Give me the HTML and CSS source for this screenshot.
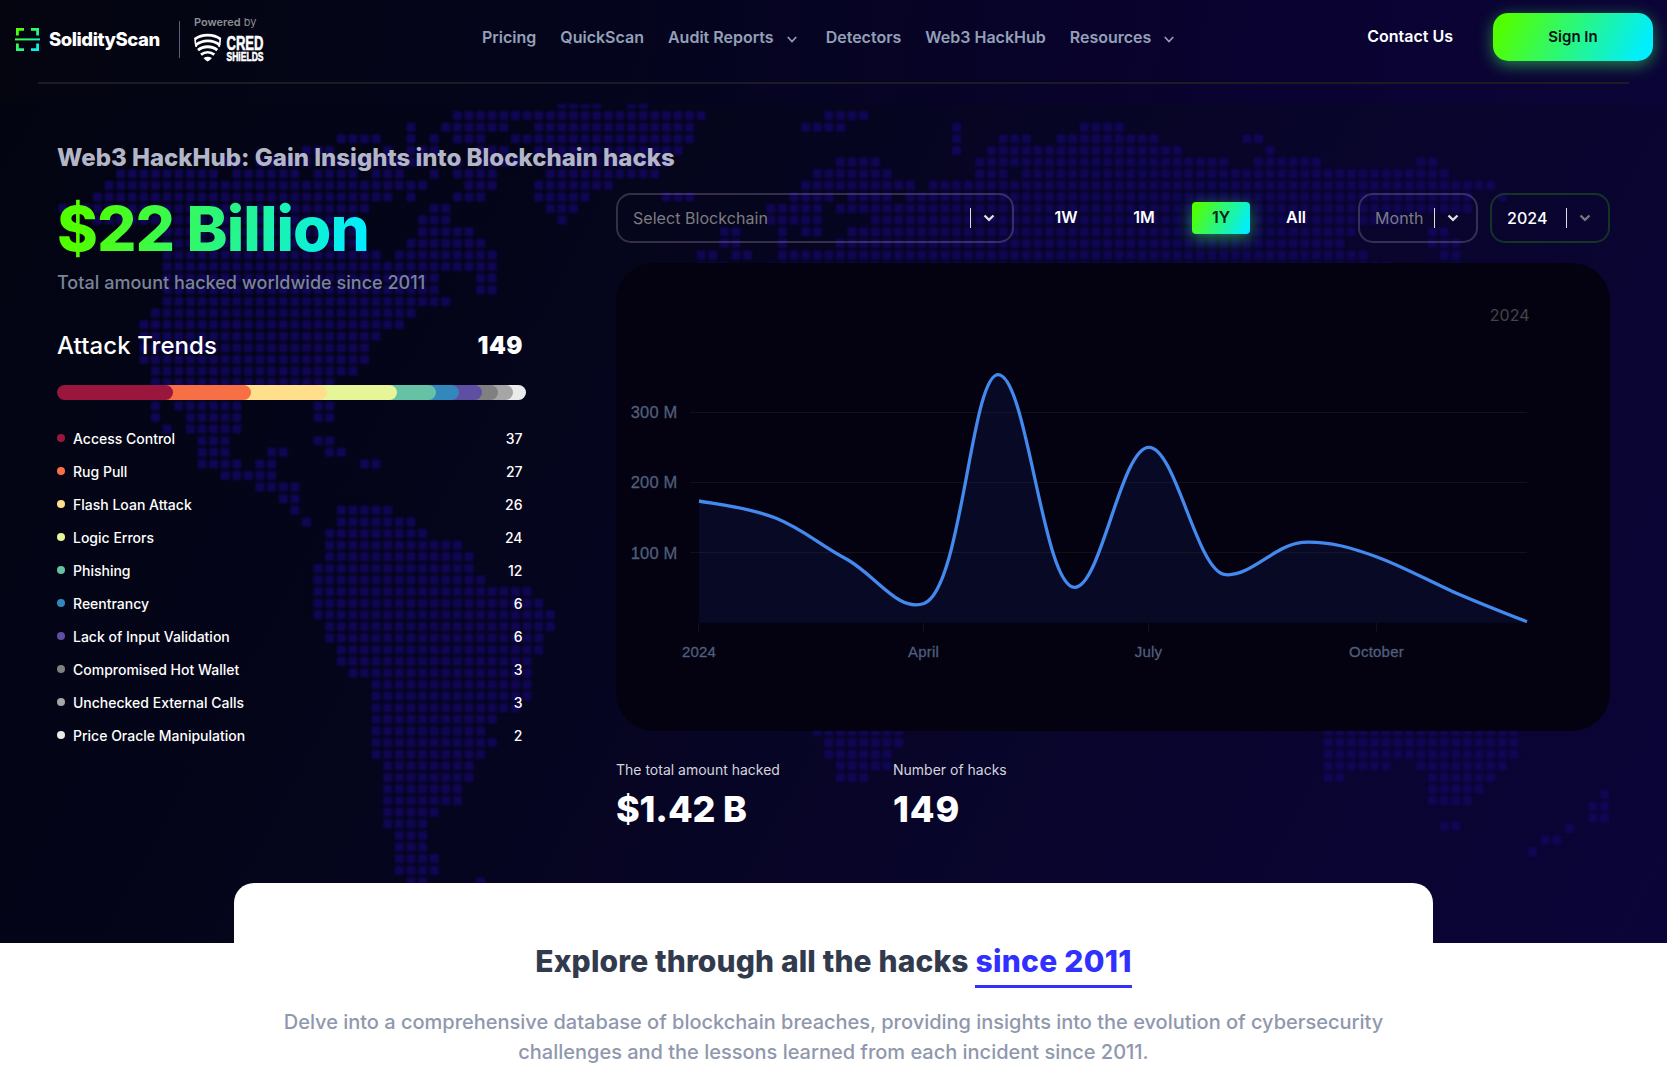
FILE: index.html
```html
<!DOCTYPE html>
<html lang="en">
<head>
<meta charset="utf-8">
<title>Web3 HackHub - SolidityScan</title>
<link rel="stylesheet" href="styles.css">
</head>
<body>
<header class="header">
  <div class="brand">
    <svg class="brand-icon" width="25" height="25" viewBox="0 0 25 25" fill="none" stroke="url(#brandGrad)" stroke-width="2.8">
      <defs><linearGradient id="brandGrad" gradientUnits="userSpaceOnUse" x1="0" y1="0" x2="25" y2="25"><stop offset="0.1" stop-color="#52ff00"/><stop offset="0.95" stop-color="#00eeff"/></linearGradient></defs>
      <path d="M2.400 8.500V2.400H9M16 2.400h6.600v6.100M2.400 16.500V22.600H9M16 22.600h6.600V16.500"/>
      <path d="M0 12.400h25v.01H0z" stroke-width="2"/>
    </svg>
    <span class="brand-name">SolidityScan</span>
    <span class="brand-divider"></span>
    <div class="powered">
      <span class="powered-label"><b>Powered</b> by</span>
      <svg class="cred-logo" width="74" height="32" viewBox="0 0 74 32">
        <g fill="none" stroke="#fff" stroke-width="2.800">
          <path d="M.8 6.200C8 .8 19.500 .8 26.600 6.200"/>
          <path d="M1.600 12.100c7-5.600 17.500-5.600 24.300 0"/>
          <path d="M4 17.100c5.500-4.500 14-4.500 19.300 0"/>
          <path d="M7 21.700c4-3.200 9.400-3.200 13.300 0"/>
          <path d="M1.100 5c0 4 .2 6.500 1.300 9" stroke-width="1.600"/>
          <path d="M26.200 5c0 4-.2 6.500-1.300 9" stroke-width="1.600"/>
        </g>
        <path d="M9.500 25q4.200-2.600 8.400 0Q16 27.500 13.700 28.500 11.400 27.500 9.500 25z" fill="#fff"/>
        <text class="cred" x="32.500" y="16.500" font-size="21" textLength="37" lengthAdjust="spacingAndGlyphs">CRED</text>
        <text class="cred" x="32.500" y="28.300" font-size="12.500" textLength="37" lengthAdjust="spacingAndGlyphs">SHiELDS</text>
      </svg>
    </div>
  </div>
  <nav class="nav">
    <a>Pricing</a><a>QuickScan</a>
    <a>Audit Reports<svg class="caret" viewBox="0 0 10 7"><path d="M.8 1 5 5.600 9.200 1"/></svg></a>
    <a>Detectors</a><a>Web3 HackHub</a>
    <a>Resources<svg class="caret" viewBox="0 0 10 7"><path d="M.8 1 5 5.600 9.200 1"/></svg></a>
  </nav>
  <div class="account">
    <a class="contact">Contact Us</a>
    <button class="signin">Sign In</button>
  </div>
</header>

<section class="hero">
  <svg class="map" id="map" width="1667" height="839"></svg>
  <div class="overview">
    <h1 class="title">Web3 HackHub: Gain Insights into Blockchain hacks</h1>
    <div class="amount">$22 Billion</div>
    <p class="amount-note">Total amount hacked worldwide since 2011</p>
    <div class="trends-head"><span>Attack Trends</span><b>149</b></div>
    <div class="trend-bar" id="bar"></div>
    <ul class="trend-list" id="trends"></ul>
  </div>
  <div class="panel">
    <div class="filters">
      <div class="select select-chain"><span>Select Blockchain</span><i></i><svg class="chev" viewBox="0 0 12 8"><path d="M1.500 1.500 6 5.800l4.500-4.300"/></svg></div>
      <div class="ranges"><button>1W</button><button>1M</button><button class="active">1Y</button><button>All</button></div>
      <div class="select select-month"><span>Month</span><i></i><svg class="chev" viewBox="0 0 12 8"><path d="M1.500 1.500 6 5.800l4.500-4.300"/></svg></div>
      <div class="select select-year"><span>2024</span><i></i><svg class="chev" viewBox="0 0 12 8"><path d="M1.500 1.500 6 5.800l4.500-4.300"/></svg></div>
    </div>
    <div class="chart">
      <svg width="994" height="468" viewBox="616 263 994 468">
        <text class="chart-year" x="1529.500" y="320.500" text-anchor="end">2024</text>
        <g class="ylabels" text-anchor="end"><text x="677.500" y="418">300 M</text><text x="677.500" y="488">200 M</text><text x="677.500" y="558.500">100 M</text></g>
        <path class="grid" d="M690 412.500h837M690 482.500h837M690 552.500h837M698.500 623v9M923.500 623v9M1148.500 623v9M1376.500 623v9"/>
        <path class="area" d="M699 501C719 504.500 749 507.500 775.600 518C804 529.500 818 544 847.300 559.500C878 577.500 898 612 923.900 603.500C962 590 971 374.600 998.100 374.600C1027 374.600 1043 587.300 1074.700 587.300C1101 587.300 1121 447.300 1148.900 447.300C1176 447.300 1197 573 1225.500 574.700C1250 577 1275 545 1302.200 542.300C1330 541 1352 548 1376.300 556.700C1403 566.500 1426 579.500 1453 591.700C1478 602.500 1502 612 1527 621.700V622.700H699z"/>
        <path class="line" d="M699 501C719 504.500 749 507.500 775.600 518C804 529.500 818 544 847.300 559.500C878 577.500 898 612 923.900 603.500C962 590 971 374.600 998.100 374.600C1027 374.600 1043 587.300 1074.700 587.300C1101 587.300 1121 447.300 1148.900 447.300C1176 447.300 1197 573 1225.500 574.700C1250 577 1275 545 1302.200 542.300C1330 541 1352 548 1376.300 556.700C1403 566.500 1426 579.500 1453 591.700C1478 602.500 1502 612 1527 621.700"/>
        <g class="xlabels" text-anchor="middle"><text x="699" y="657">2024</text><text x="923.500" y="657">April</text><text x="1148.500" y="657">July</text><text x="1376.500" y="657">October</text></g>
      </svg>
    </div>
    <div class="stats">
      <div class="stat"><span>The total amount hacked</span><b>$1.42 B</b></div>
      <div class="stat"><span>Number of hacks</span><b class="count">149</b></div>
    </div>
  </div>
</section>

<section class="explore">
  <h2>Explore through all the hacks <span>since 2011</span></h2>
  <p>Delve into a comprehensive database of blockchain breaches, providing insights into the evolution of cybersecurity challenges and the lessons learned from each incident since 2011.</p>
</section>
<script src="script.js"></script>
</body>
</html>
```
FILE: styles.css
```css
* { box-sizing: border-box; }
body { margin: 0; background: #fff; font-family: Inter, "Liberation Sans", sans-serif; color: #fff; }
h1, h2, p, ul { margin: 0; padding: 0; }
button { font: inherit; border: 0; padding: 0; background: none; color: inherit; }

.header { position: relative; display: grid; grid-template-columns: 482px 1fr auto; height: 104px; background: linear-gradient(97deg, #04050f 0%, #04051c 35%, #0a0230 75%, #0b0437 100%); }
.header::after { content: ""; position: absolute; left: 38px; right: 38px; top: 82px; height: 2px; background: #1c1a22; }
.brand { display: flex; align-items: flex-start; padding-left: 15px; }
.brand-icon { margin-top: 27px; }
.brand-name { margin: 28px 0 0 9px; width: 111px; font-size: 18.500px; font-weight: 800; letter-spacing: -0.45px; line-height: 22px; white-space: nowrap; }
.brand-divider { width: 1px; height: 37px; margin: 21px 0 0 19px; background: #56617a; }
.powered { margin: 15px 0 0 14px; display: flex; flex-direction: column; }
.powered-label { font-size: 11px; line-height: 14px; color: #8d8d90; margin-bottom: 4px; }
.powered-label b { font-weight: 600; }
.cred-logo { overflow: visible; }
.cred { font-family: "Liberation Sans", sans-serif; font-weight: 700; fill: #fff; stroke: #fff; stroke-width: .6; }
.nav { display: flex; gap: 24px; padding-top: 27px; font-size: 16px; font-weight: 600; line-height: 20px; color: #94a0b8; white-space: nowrap; }
.caret { width: 10px; height: 7px; margin: 0 5px 0 13px; fill: none; stroke: #94a0b8; stroke-width: 1.700; }
.account { display: flex; align-items: flex-start; gap: 40px; padding: 13px 14px 0 0; font-size: 16px; font-weight: 600; }
.contact { line-height: 20px; margin-top: 13px; }
.signin { width: 160px; height: 48px; padding-bottom: 1px; border-radius: 15px; color: #04101a; font-size: 15px; font-weight: 600; background: linear-gradient(118deg, #52ff00 8%, #00eeff 92%); box-shadow: 0 4px 16px rgba(60, 255, 100, .5); }

.hero { position: relative; display: grid; grid-template-columns: 469px 994px; column-gap: 90px; height: 839px; padding-left: 57px; background: linear-gradient(118deg, #020411 0%, #05051b 32%, #080529 60%, #0b0438 100%); }
.map { position: absolute; left: 0; top: 0; fill: #100654; overflow: hidden; filter: blur(.8px); }
.overview, .panel { position: relative; }
.title { margin-top: 39px; font-size: 24px; line-height: 30px; font-weight: 800; color: #b3b6c6; white-space: nowrap; }
.amount { width: max-content; margin-top: 17px; font-size: 62px; line-height: 78px; font-weight: 800; letter-spacing: -1px; color: transparent; background: linear-gradient(105deg, #52ff00 10%, #00eeff 95%); background-clip: text; -webkit-background-clip: text; }
.amount-note { margin-top: 3px; font-size: 18px; line-height: 24px; font-weight: 500; letter-spacing: .03px; color: #7b8499; }
.trends-head { display: flex; justify-content: space-between; margin-top: 36px; padding-right: 3px; font-size: 24px; line-height: 30px; font-weight: 500; letter-spacing: .08px; }
.trends-head b { font-weight: 900; letter-spacing: .5px; }
.trend-bar { display: flex; margin-top: 24px; height: 15px; }
.segment { height: 15px; margin-right: -8px; padding: 0; border-radius: 8px; position: relative; box-sizing: content-box; }
.trend-list { list-style: none; margin-top: 22px; padding-right: 3.500px; }
.trend-list li { display: flex; align-items: center; height: 33px; font-size: 14px; font-weight: 500; }
.trend-list i { width: 8px; height: 8px; margin: -2px 8px 0 0; border-radius: 50%; }
.trend-list span { flex: 1; }

.filters { display: flex; margin-top: 89px; height: 50px; }
.select { display: flex; align-items: center; height: 50px; padding: 0 17px 0 15px; border: 2px solid rgba(120, 105, 140, .42); border-radius: 15px; font-size: 16px; letter-spacing: .05px; color: #7c7c80; }
.select span { flex: 1; }
.select i { width: 1px; height: 20px; background: #dcdce2; }
.chev { width: 12px; height: 8px; margin-left: 12px; fill: none; stroke: #dedee4; stroke-width: 2.300; }
.select-chain { width: 398px; }
.select-month { width: 120px; margin-right: 12px; }
.select-year { width: 120px; border-color: #143426; color: #fff; font-weight: 500; }
.select-year .chev { stroke: #77777f; }
.ranges { display: flex; align-items: center; gap: 20px; width: 344px; padding-left: 23px; padding-bottom: 1px; }
.ranges button { width: 58px; height: 32px; padding-bottom: 2px; font-size: 16px; font-weight: 600; border-radius: 4px; }
.ranges button:last-child { margin-left: -3px; }
.ranges .active { margin-left: -1px; color: #04201a; background: linear-gradient(118deg, #52ff00 8%, #00eeff 92%); box-shadow: 0 4px 16px rgba(60, 255, 100, .5); }
.chart { margin-top: 20px; height: 468px; border-radius: 38px; background: #040211; }
.chart svg { display: block; }
.chart-year { font-size: 16px; fill: #454548; }
.ylabels, .xlabels { font-family: "Liberation Sans", Arial, sans-serif; fill: #4f5e7c; stroke: #4f5e7c; stroke-width: .3; letter-spacing: .2px; }
.ylabels { font-size: 16.500px; }
.xlabels { font-size: 15px; }
.grid { fill: none; stroke: #111117; }
.area { fill: rgba(30, 64, 175, .13); }
.line { fill: none; stroke: #4489ee; stroke-width: 3.300; }
.stats { display: flex; margin-top: 29px; }
.stat { width: 277px; display: flex; flex-direction: column; }
.stat span { font-size: 14px; line-height: 20px; color: #d5d5de; }
.stat b { margin-top: 7px; font-size: 36px; line-height: 44px; font-weight: 800; letter-spacing: -0.15px; }
.stat .count { letter-spacing: .9px; }

.explore { position: relative; width: 1199px; height: 205px; margin: -60px 0 0 234px; padding-top: 58px; border-radius: 20px 20px 0 0; background: #fff; text-align: center; }
.explore h2 { font-size: 30px; line-height: 40px; font-weight: 800; letter-spacing: .14px; color: #323a4d; }
.explore h2 span { display: inline-block; color: #3130ff; height: 47px; border-bottom: 3px solid #3130ff; letter-spacing: .28px; }
.explore p { width: 1120px; margin: 19px auto 0; font-size: 20px; line-height: 30px; font-weight: 500; letter-spacing: -0.01px; color: #8f98ad; }
```
FILE: script.js
```js
// Runs of land cells [first, last] per grid row.
const land = {
  0: [[43,46],[49,50]],
  1: [[34,55],[66,69]],
  2: [[30,30],[33,38],[41,54],[64,67],[77,77],[88,91]],
  3: [[24,27],[30,30],[32,32],[34,36],[39,54],[77,77],[81,83],[86,94],[102,103]],
  4: [[21,23],[28,28],[30,32],[36,38],[41,53],[77,77],[80,96],[104,104]],
  5: [[14,15],[17,21],[23,31],[34,34],[36,39],[42,52],[67,70],[79,100],[103,108],[117,118]],
  6: [[5,13],[15,20],[22,25],[27,29],[32,32],[34,37],[42,51],[65,71],[79,81],[83,119]],
  7: [[4,31],[35,37],[41,47],[64,73],[75,123]],
  8: [[3,28],[30,30],[34,36],[41,45],[52,54],[63,66],[68,71],[73,121],[124,124]],
  9: [[0,26],[32,33],[42,44],[61,65],[67,121]],
  10: [[3,25],[31,33],[43,43],[61,65],[70,115]],
  11: [[9,25],[31,35],[57,58],[62,62],[64,65],[68,111],[118,119]],
  12: [[9,25],[30,36],[57,58],[62,62],[67,110],[118,120]],
  13: [[9,27],[29,37],[55,56],[58,59],[62,112],[119,120]],
  14: [[9,37],[55,57],[61,114],[120,120]],
  15: [[9,32],[36,37]], 16: [[9,32],[36,37]], 17: [[9,33]], 18: [[8,30]], 19: [[7,29]],
  20: [[7,27]], 21: [[7,26]], 22: [[7,26]], 23: [[8,25]], 24: [[8,23]], 25: [[8,23]],
  26: [[8,8],[10,15],[22,23]], 27: [[8,8],[11,15],[22,23]], 28: [[9,9],[11,15]],
  29: [[12,14],[22,23]], 30: [[12,14],[18,19],[23,24]], 31: [[12,15],[17,18],[26,27]],
  32: [[14,18]], 33: [[17,20]], 34: [[19,20]], 35: [[20,20],[24,28]], 36: [[21,21],[24,30]],
  37: [[23,31]], 38: [[23,34]], 39: [[23,35]], 40: [[22,35]], 41: [[22,36]], 42: [[22,40]],
  43: [[22,41]], 44: [[22,42]], 45: [[23,42]], 46: [[23,41]], 47: [[24,41]], 48: [[24,40]],
  49: [[25,40]], 50: [[27,40]], 51: [[27,40]], 52: [[27,39]], 53: [[27,37]],
  54: [[27,36],[65,72],[109,125]], 55: [[27,37],[66,72],[109,125]], 56: [[27,36],[66,71],[109,125]],
  57: [[28,35],[67,71],[109,114],[117,124]], 58: [[28,35],[67,69],[109,110],[118,123]],
  59: [[28,34],[118,122]], 60: [[28,34],[118,121]], 61: [[28,32]], 62: [[28,31]],
  63: [[29,31]], 64: [[29,31]], 65: [[29,32]], 66: [[29,32]], 67: [[30,31],[36,36]],
  62.2: [[119,120]], 59.45: [[132.8,132.8]], 60.5: [[131.8,132.8]], 61.5: [[131.8,132.8]],
  62.4: [[129.8,129.8]], 63.4: [[127.7,128.7]], 64.4: [[126.6,126.6]]
};
const pitch = 11.61, size = 9;
let dots = "";
for (const [row, runs] of Object.entries(land)) {
  for (const [a, b] of runs) {
    for (let c = a; c <= b + 0.01; c++) {
      const x = 62.66 + pitch * c - size / 2, y = pitch * row - size / 2;
      dots += `<rect x="${x.toFixed(1)}" y="${y.toFixed(1)}" width="${size}" height="${size}" rx="1.5"/>`;
    }
  }
}
document.getElementById("map").innerHTML = dots;

// name, count, colour, right edge of the segment in the bar
const trends = [
  ["Access Control", 37, "#9b163c", 116],
  ["Rug Pull", 27, "#f86f45", 194],
  ["Flash Loan Attack", 26, "#ffdf8c", 270],
  ["Logic Errors", 24, "#e6f598", 340],
  ["Phishing", 12, "#66c2a5", 379],
  ["Reentrancy", 6, "#3288bd", 402],
  ["Lack of Input Validation", 6, "#5e4fa2", 425],
  ["Compromised Hot Wallet", 3, "#808080", 441],
  ["Unchecked External Calls", 3, "#a6a6a6", 456],
  ["Price Oracle Manipulation", 2, "#ebebeb", 469]
];
let bar = "", list = "", from = 0;
trends.forEach(([name, count, color, to], i) => {
  const start = i ? from - 8 : 0;
  bar += `<div class="segment" style="width:${to - start}px;background:${color};z-index:${20 - i};${i ? "border-radius:0 8px 8px 0" : ""}"></div>`;
  list += `<li><i style="background:${color}"></i><span>${name}</span>${count}</li>`;
  from = to;
});
document.getElementById("bar").innerHTML = bar;
document.getElementById("trends").innerHTML = list;
```
